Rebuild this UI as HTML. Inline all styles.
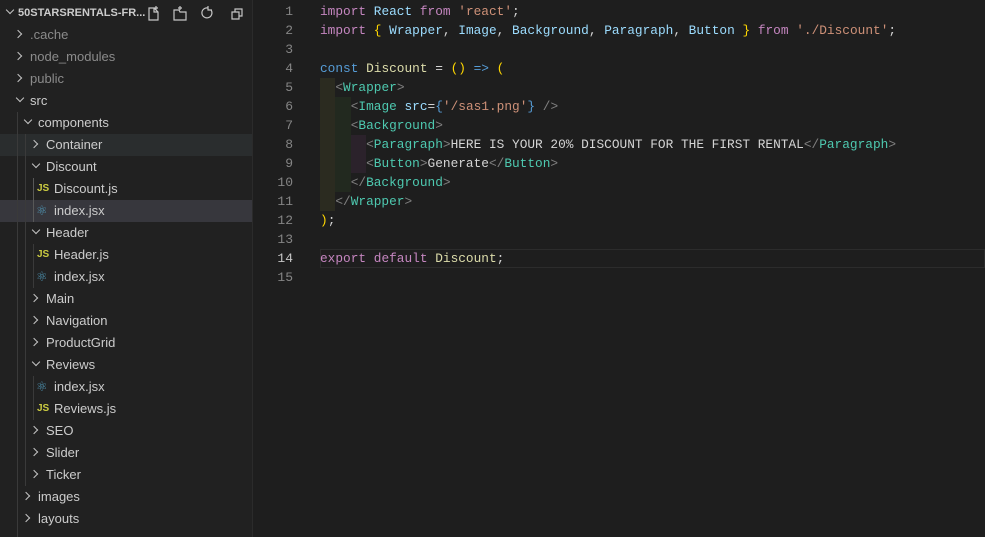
<!DOCTYPE html>
<html><head><style>
body{margin:0;width:985px;height:537px;overflow:hidden;background:#1e1e1e;font-family:"Liberation Sans",sans-serif;position:relative}
#sb{position:absolute;left:0;top:0;width:252px;height:537px;background:#212121;border-right:1px solid #2b2b2b}
.r{position:absolute;left:0;width:252px;height:22px;line-height:22px;font-size:13px;color:#cccccc;white-space:nowrap}
.r .t{position:absolute}
.ch{position:absolute;top:7px;width:5px;height:5px;border-right:1.3px solid #c5c5c5;border-bottom:1.3px solid #c5c5c5}
.cr{transform:rotate(-45deg)}
.cd{transform:rotate(45deg);top:5px}
.js{position:absolute;font-size:10px;font-weight:bold;color:#cbcb41;top:0}
.re{position:absolute;color:#519aba;font-size:13px}
.g{position:absolute;width:1px;background:#3a3a3a}
#ed{position:absolute;left:253px;top:0;right:0;bottom:0}
.ln{position:absolute;left:0;width:40px;text-align:right;font:13px "Liberation Mono",monospace;color:#858585;height:19px;line-height:19px}
.cl{position:absolute;left:67px;font:12.8px "Liberation Mono",monospace;color:#d4d4d4;height:19px;line-height:19px;white-space:pre}
.k{color:#c586c0}.v{color:#9cdcfe}.s{color:#ce9178}.y{color:#ffd700}.b{color:#569cd6}.p{color:#808080}.tg{color:#4ec9b0}.d{color:#dcdcaa}.w{color:#d4d4d4}
</style></head><body>
<div id="sb">
<div class="r" style="top:2px;font-size:11px;font-weight:bold"><span class="ch cd" style="left:7px"></span><span class="t" style="left:18px">50STARSRENTALS-FR...</span>
<svg style="position:absolute;left:146px;top:3px" width="100" height="16" fill="none" stroke="#c5c5c5" stroke-width="1.2"><path d="M3 3h5l4 4v8H3zM8 3v4h4M10 1v4M8 3h4"/><path d="M28 5h5l1 2h6v8H28zM34 1v4M32 3h4"/><path d="M62 3a5 5 0 1 0 3 2M62 1v4h4"/><path d="M86 7h7v7h-7zM89 7V4h7v7h-3"/></svg></div>
<div class="r" style="top:24px;color:#8b8b8b"><span class="ch cr" style="left:15px"></span><span class="t" style="left:30px">.cache</span></div>
<div class="r" style="top:46px;color:#8b8b8b"><span class="ch cr" style="left:15px"></span><span class="t" style="left:30px">node_modules</span></div>
<div class="r" style="top:68px;color:#8b8b8b"><span class="ch cr" style="left:15px"></span><span class="t" style="left:30px">public</span></div>
<div class="r" style="top:90px"><span class="ch cd" style="left:17px"></span><span class="t" style="left:30px">src</span></div>
<div class="r" style="top:112px"><span class="ch cd" style="left:25px"></span><span class="t" style="left:38px">components</span></div>
<div class="r" style="top:134px;background:#2a2d2e"><span class="ch cr" style="left:31px"></span><span class="t" style="left:46px">Container</span></div>
<div class="r" style="top:156px"><span class="ch cd" style="left:33px"></span><span class="t" style="left:46px">Discount</span></div>
<div class="r" style="top:178px"><span class="js" style="left:37px">JS</span><span class="t" style="left:54px">Discount.js</span></div>
<div class="r" style="top:200px;background:#37373d"><span class="re" style="left:36px">⚛</span><span class="t" style="left:54px">index.jsx</span></div>
<div class="r" style="top:222px"><span class="ch cd" style="left:33px"></span><span class="t" style="left:46px">Header</span></div>
<div class="r" style="top:244px"><span class="js" style="left:37px">JS</span><span class="t" style="left:54px">Header.js</span></div>
<div class="r" style="top:266px"><span class="re" style="left:36px">⚛</span><span class="t" style="left:54px">index.jsx</span></div>
<div class="r" style="top:288px"><span class="ch cr" style="left:31px"></span><span class="t" style="left:46px">Main</span></div>
<div class="r" style="top:310px"><span class="ch cr" style="left:31px"></span><span class="t" style="left:46px">Navigation</span></div>
<div class="r" style="top:332px"><span class="ch cr" style="left:31px"></span><span class="t" style="left:46px">ProductGrid</span></div>
<div class="r" style="top:354px"><span class="ch cd" style="left:33px"></span><span class="t" style="left:46px">Reviews</span></div>
<div class="r" style="top:376px"><span class="re" style="left:36px">⚛</span><span class="t" style="left:54px">index.jsx</span></div>
<div class="r" style="top:398px"><span class="js" style="left:37px">JS</span><span class="t" style="left:54px">Reviews.js</span></div>
<div class="r" style="top:420px"><span class="ch cr" style="left:31px"></span><span class="t" style="left:46px">SEO</span></div>
<div class="r" style="top:442px"><span class="ch cr" style="left:31px"></span><span class="t" style="left:46px">Slider</span></div>
<div class="r" style="top:464px"><span class="ch cr" style="left:31px"></span><span class="t" style="left:46px">Ticker</span></div>
<div class="r" style="top:486px"><span class="ch cr" style="left:23px"></span><span class="t" style="left:38px">images</span></div>
<div class="r" style="top:508px"><span class="ch cr" style="left:23px"></span><span class="t" style="left:38px">layouts</span></div>
<div class="g" style="left:17px;top:112px;height:425px"></div>
<div class="g" style="left:25px;top:134px;height:352px"></div>
<div class="g" style="left:33px;top:178px;height:44px;background:#585858"></div>
<div class="g" style="left:33px;top:244px;height:44px"></div>
<div class="g" style="left:33px;top:376px;height:44px"></div>
</div>
<div id="ed">
<div style="position:absolute;left:67px;top:249px;right:0;height:17px;border:1px solid #2c2c2c"></div>
<div style="position:absolute;left:67px;top:78px;width:15px;height:133px;background:#2b2b20"></div>
<div style="position:absolute;left:82px;top:97px;width:16px;height:95px;background:#22291f"></div>
<div style="position:absolute;left:98px;top:135px;width:15px;height:38px;background:#2b222b"></div>
<div class="ln" style="top:2px">1</div><div class="ln" style="top:21px">2</div><div class="ln" style="top:40px">3</div><div class="ln" style="top:59px">4</div><div class="ln" style="top:78px">5</div><div class="ln" style="top:97px">6</div><div class="ln" style="top:116px">7</div><div class="ln" style="top:135px">8</div><div class="ln" style="top:154px">9</div><div class="ln" style="top:173px">10</div><div class="ln" style="top:192px">11</div><div class="ln" style="top:211px">12</div><div class="ln" style="top:230px">13</div><div class="ln" style="top:249px;color:#c6c6c6">14</div><div class="ln" style="top:268px">15</div>
<div class="cl" style="top:2px"><span class="k">import</span> <span class="v">React</span> <span class="k">from</span> <span class="s">'react'</span>;</div>
<div class="cl" style="top:21px"><span class="k">import</span> <span class="y">{</span> <span class="v">Wrapper</span>, <span class="v">Image</span>, <span class="v">Background</span>, <span class="v">Paragraph</span>, <span class="v">Button</span> <span class="y">}</span> <span class="k">from</span> <span class="s">'./Discount'</span>;</div>
<div class="cl" style="top:59px"><span class="b">const</span> <span class="d">Discount</span> = <span class="y">()</span> <span class="b">=&gt;</span> <span class="y">(</span></div>
<div class="cl" style="top:78px">  <span class="p">&lt;</span><span class="tg">Wrapper</span><span class="p">&gt;</span></div>
<div class="cl" style="top:97px">    <span class="p">&lt;</span><span class="tg">Image</span> <span class="v">src</span>=<span class="b">{</span><span class="s">'/sas1.png'</span><span class="b">}</span> <span class="p">/&gt;</span></div>
<div class="cl" style="top:116px">    <span class="p">&lt;</span><span class="tg">Background</span><span class="p">&gt;</span></div>
<div class="cl" style="top:135px">      <span class="p">&lt;</span><span class="tg">Paragraph</span><span class="p">&gt;</span>HERE IS YOUR 20% DISCOUNT FOR THE FIRST RENTAL<span class="p">&lt;/</span><span class="tg">Paragraph</span><span class="p">&gt;</span></div>
<div class="cl" style="top:154px">      <span class="p">&lt;</span><span class="tg">Button</span><span class="p">&gt;</span>Generate<span class="p">&lt;/</span><span class="tg">Button</span><span class="p">&gt;</span></div>
<div class="cl" style="top:173px">    <span class="p">&lt;/</span><span class="tg">Background</span><span class="p">&gt;</span></div>
<div class="cl" style="top:192px">  <span class="p">&lt;/</span><span class="tg">Wrapper</span><span class="p">&gt;</span></div>
<div class="cl" style="top:211px"><span class="y">)</span>;</div>
<div class="cl" style="top:249px"><span class="k">export</span> <span class="k">default</span> <span class="d">Discount</span>;</div>
</div>
</body></html>
